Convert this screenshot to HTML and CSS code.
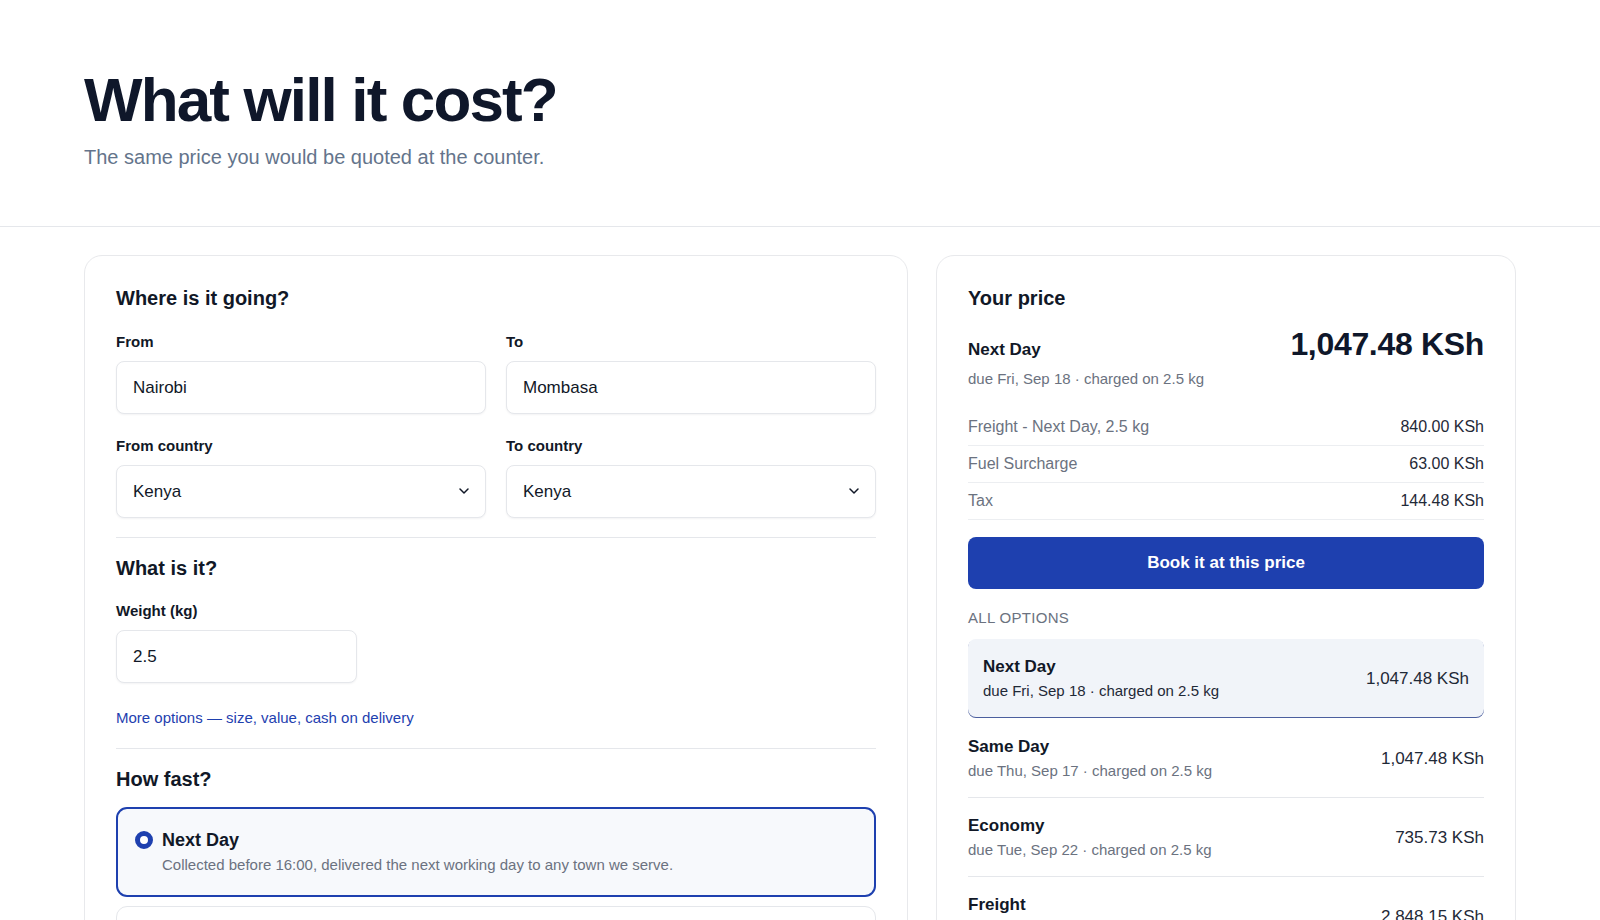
FILE: index.html
```html
<!DOCTYPE html>
<html lang="en">
<head>
  <meta charset="UTF-8" />
  <meta name="viewport" content="width=device-width, initial-scale=1.0"/>
  <title>What will it cost?</title>
  <link rel="stylesheet" href="styles.css">
</head>
<body>
  <!-- Page title -->
  <header class="page-head">
    <h1>What will it cost?</h1>
    <p>The same price you would be quoted at the counter.</p>
  </header>

  <main class="quote">
    <!-- Shipment form -->
    <section class="card form-card">
      <div class="block">
        <h2>Where is it going?</h2>
        <div class="grid-2">
          <label class="field">
            <span class="field-label">From</span>
            <input class="input" type="text" value="Nairobi">
          </label>
          <label class="field">
            <span class="field-label">To</span>
            <input class="input" type="text" value="Mombasa">
          </label>
          <label class="field">
            <span class="field-label">From country</span>
            <span class="select">
              <select class="input">
                <option>Kenya</option>
              </select>
              <svg class="chevron" viewBox="0 0 12 12" width="12" height="12"><path d="M2 4l4 4 4-4" fill="none" stroke="#111827" stroke-width="1.5" stroke-linecap="round" stroke-linejoin="round"/></svg>
            </span>
          </label>
          <label class="field">
            <span class="field-label">To country</span>
            <span class="select">
              <select class="input">
                <option>Kenya</option>
              </select>
              <svg class="chevron" viewBox="0 0 12 12" width="12" height="12"><path d="M2 4l4 4 4-4" fill="none" stroke="#111827" stroke-width="1.5" stroke-linecap="round" stroke-linejoin="round"/></svg>
            </span>
          </label>
        </div>
      </div>

      <div class="block">
        <h2>What is it?</h2>
        <label class="field">
          <span class="field-label">Weight (kg)</span>
          <input class="input input-short" type="text" value="2.5">
        </label>
        <a class="more-link" href="#">More options — size, value, cash on delivery</a>
      </div>

      <div class="block">
        <h2 class="tight">How fast?</h2>
        <div class="speeds">
          <label class="speed is-active">
            <span class="dot"></span>
            <span class="speed-text">
              <span class="speed-name">Next Day</span>
              <span class="speed-desc">Collected before 16:00, delivered the next working day to any town we serve.</span>
            </span>
          </label>
          <label class="speed">
            <span class="dot"></span>
            <span class="speed-text">
              <span class="speed-name">Same Day</span>
              <span class="speed-desc">Collected before 10:00, delivered the same evening within the city.</span>
            </span>
          </label>
          <label class="speed">
            <span class="dot"></span>
            <span class="speed-text">
              <span class="speed-name">Economy</span>
              <span class="speed-desc">Our lowest price, delivered within five working days.</span>
            </span>
          </label>
        </div>
      </div>
    </section>

    <!-- Price summary -->
    <aside class="card price-card">
      <h2>Your price</h2>
      <div class="quote-top">
        <span class="quote-name">Next Day</span>
        <span class="quote-total">1,047.48 KSh</span>
      </div>
      <div class="quote-sub">due Fri, Sep 18 · charged on 2.5 kg</div>

      <ul class="breakdown">
        <li><span>Freight - Next Day, 2.5 kg</span><span class="amt">840.00 KSh</span></li>
        <li><span>Fuel Surcharge</span><span class="amt">63.00 KSh</span></li>
        <li><span>Tax</span><span class="amt">144.48 KSh</span></li>
      </ul>

      <button class="book">Book it at this price</button>

      <div class="eyebrow">All options</div>
      <ul class="options">
        <li class="opt is-active">
          <div>
            <div class="opt-name">Next Day</div>
            <div class="opt-sub">due Fri, Sep 18 · charged on 2.5 kg</div>
          </div>
          <div class="opt-price">1,047.48 KSh</div>
        </li>
        <li class="opt">
          <div>
            <div class="opt-name">Same Day</div>
            <div class="opt-sub">due Thu, Sep 17 · charged on 2.5 kg</div>
          </div>
          <div class="opt-price">1,047.48 KSh</div>
        </li>
        <li class="opt">
          <div>
            <div class="opt-name">Economy</div>
            <div class="opt-sub">due Tue, Sep 22 · charged on 2.5 kg</div>
          </div>
          <div class="opt-price">735.73 KSh</div>
        </li>
        <li class="opt">
          <div>
            <div class="opt-name">Freight</div>
            <div class="opt-sub">due Wed, Sep 23 · charged on 2.5 kg</div>
          </div>
          <div class="opt-price">2,848.15 KSh</div>
        </li>
      </ul>
    </aside>
  </main>
</body>
</html>
```

FILE: styles.css
```css
* {
  box-sizing: border-box;
}

body {
  margin: 0;
  background: #fff;
  color: #111827;
  font-family: "Liberation Sans", Arial, sans-serif;
}

ul {
  list-style: none;
  margin: 0;
  padding: 0;
}

/* Page title */
.page-head {
  padding: 66px 84px 55px;
  border-bottom: 1px solid #e5e7eb;
}

.page-head h1 {
  margin: 0;
  font-size: 62px;
  line-height: 68px;
  font-weight: 700;
  letter-spacing: -0.03em;
  color: #0f172a;
}

.page-head p {
  margin: 9px 0 0;
  font-size: 20px;
  line-height: 28px;
  color: #64748b;
}

/* Two columns */
.quote {
  display: grid;
  grid-template-columns: minmax(0, 1fr) 580px;
  gap: 28px;
  align-items: start;
  padding: 28px 84px 0;
}

.card {
  background: #fff;
  border: 1px solid #e8e9ec;
  border-radius: 18px;
  padding: 28px 31px 31px;
}

.card h2 {
  margin: 0 0 20px;
  font-size: 20px;
  line-height: 28px;
  font-weight: 700;
  color: #111827;
}

/* Form */
.block + .block {
  margin-top: 19px;
  padding-top: 16px;
  border-top: 1px solid #e5e7eb;
}

.block + .block h2 {
  margin-bottom: 19px;
}

.block h2.tight {
  margin-bottom: 14px;
}

.grid-2 {
  display: grid;
  grid-template-columns: 1fr 1fr;
  column-gap: 20px;
  row-gap: 22px;
}

.field {
  display: flex;
  flex-direction: column;
}

.field-label {
  font-size: 15px;
  line-height: 20px;
  font-weight: 700;
  color: #111827;
  margin-bottom: 9px;
}

.input {
  width: 100%;
  height: 53px;
  padding: 0 16px;
  border: 1px solid #e5e7eb;
  border-radius: 8px;
  background: #fff;
  box-shadow: 0 1px 2px rgba(15, 23, 42, 0.05);
  font-family: inherit;
  font-size: 17px;
  color: #111827;
  outline: none;
}

.input-short {
  width: 241px;
}

.select {
  position: relative;
  display: block;
}

.select select {
  appearance: none;
  -webkit-appearance: none;
}

.chevron {
  position: absolute;
  right: 16px;
  top: 20px;
  pointer-events: none;
}

.more-link {
  display: inline-block;
  margin-top: 24px;
  font-size: 15px;
  line-height: 22px;
  color: #1e40af;
  text-decoration: none;
}

/* Speed choices */
.speeds {
  display: flex;
  flex-direction: column;
  gap: 9px;
}

.speed {
  display: flex;
  gap: 9px;
  padding: 20px 18px 20px;
  border: 1px solid #e5e7eb;
  border-radius: 11px;
  background: #fff;
}

.speed.is-active {
  padding: 19px 17px 19px;
  border: 2px solid #1e40af;
  background: #f7f9fc;
}

.dot {
  flex: none;
  width: 18px;
  height: 18px;
  margin-top: 3px;
  border-radius: 50%;
  border: 1.5px solid #cbd5e1;
  background: #fff;
}

.speed.is-active .dot {
  border: 5px solid #1e40af;
}

.speed-text {
  display: flex;
  flex-direction: column;
}

.speed-name {
  font-size: 18px;
  line-height: 24px;
  font-weight: 700;
  color: #111827;
}

.speed-desc {
  margin-top: 2px;
  font-size: 15px;
  line-height: 22px;
  color: #6b7280;
}

/* Price card */
.price-card h2 {
  margin-bottom: 16px;
}

.quote-top {
  display: flex;
  justify-content: space-between;
  align-items: baseline;
}

.quote-name {
  font-size: 17px;
  line-height: 24px;
  font-weight: 700;
}

.quote-total {
  font-size: 32px;
  line-height: 32px;
  font-weight: 700;
  letter-spacing: -0.01em;
  color: #0f172a;
}

.quote-sub {
  margin-top: 6px;
  font-size: 15px;
  line-height: 22px;
  color: #6b7280;
}

.breakdown {
  margin-top: 19px;
}

.breakdown li {
  display: flex;
  justify-content: space-between;
  padding: 6px 0;
  font-size: 16px;
  line-height: 24px;
  color: #6b7280;
  border-bottom: 1px solid #eceef1;
}

.breakdown .amt {
  color: #1f2937;
}

.book {
  display: block;
  width: 100%;
  height: 52px;
  margin-top: 17px;
  border: none;
  border-radius: 8px;
  background: #1e40af;
  color: #fff;
  font-family: inherit;
  font-size: 17px;
  font-weight: 700;
  cursor: pointer;
}

.eyebrow {
  margin-top: 19px;
  font-size: 15px;
  line-height: 20px;
  letter-spacing: 0.02em;
  text-transform: uppercase;
  color: #6b7280;
}

.options {
  margin-top: 11px;
}

.opt {
  display: flex;
  justify-content: space-between;
  align-items: center;
  padding: 16px 0 15px;
  border-bottom: 1px solid #e5e7eb;
}

.opt.is-active {
  margin-bottom: 2px;
  padding: 16px 15px 15px;
  border-bottom: none;
  border-radius: 8px;
  background: #f1f4f9;
  box-shadow: 0 1px 0 #4b5e9e;
}

.opt-name {
  font-size: 17px;
  line-height: 24px;
  font-weight: 700;
  color: #111827;
}

.opt-sub {
  margin-top: 1px;
  font-size: 15px;
  line-height: 22px;
  color: #6b7280;
}

.opt.is-active .opt-sub {
  color: #1f2937;
}

.opt-price {
  font-size: 17px;
  color: #1f2937;
}
```
